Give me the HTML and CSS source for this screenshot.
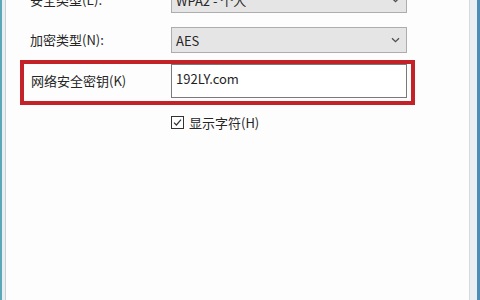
FILE: index.html
```html
<!DOCTYPE html>
<html lang="zh-CN">
<head>
<meta charset="utf-8">
<title>网络属性</title>
<link rel="stylesheet" href="styles.css">
</head>
<body>
<div class="window">
  <div class="panel">
    <div class="row first">
      <span class="label">安全类型(E):</span>
      <div class="select"><span>WPA2 - 个人</span><svg class="chev" width="9" height="6" viewBox="0 0 9 6"><path d="M1 1.2 L4.5 4.6 L8 1.2" fill="none" stroke="#505050" stroke-width="1.3"/></svg></div>
    </div>
    <div class="row second">
      <span class="label">加密类型(N):</span>
      <div class="select"><span>AES</span><svg class="chev" width="9" height="6" viewBox="0 0 9 6"><path d="M1 1.2 L4.5 4.6 L8 1.2" fill="none" stroke="#505050" stroke-width="1.3"/></svg></div>
    </div>
    <div class="keybox">
      <span class="label klabel">网络安全密钥(K)</span>
      <div class="input">192LY.com</div>
    </div>
    <label class="check">
      <span class="box"><svg width="11" height="11" viewBox="0 0 11 11"><path d="M2 5.6 L4.4 8 L9 2.6" fill="none" stroke="#333" stroke-width="1.2"/></svg></span>
      <span>显示字符(H)</span>
    </label>
  </div>
</div>
</body>
</html>
```
FILE: styles.css
```css
html, body {
  margin: 0;
  padding: 0;
  width: 480px;
  height: 300px;
  overflow: hidden;
  background: #ffffff;
  font-family: "Noto Sans CJK SC", "Noto Sans", sans-serif;
  font-size: 13px;
  color: #262626;
}

.window {
  box-sizing: border-box;
  width: 480px;
  height: 300px;
  display: flex;
  border-left: 2px solid #5ca7b6;
  border-right: 3px solid #4f8cb6;
  background: #e9eff2;
  padding: 0 7px 0 3px;
}

.panel {
  flex: 1;
  background: #fdfdfd;
  border-left: 1px solid #c9d0d4;
  border-right: 1px solid #d6d9dc;
  overflow: hidden;
}

.row {
  display: flex;
  align-items: center;
  height: 26px;
  margin-left: 24px;
}

.row.first {
  margin-top: -13px;
}

.row.second {
  margin-top: 14px;
}

.label {
  width: 141px;
  flex: none;
  line-height: 16px;
}

.select {
  box-sizing: border-box;
  width: 236px;
  height: 26px;
  display: flex;
  align-items: center;
  justify-content: space-between;
  padding: 0 6px 0 4px;
  background: #e5e5e5;
  border: 1px solid #adadad;
}

.chev {
  display: block;
}

.keybox {
  box-sizing: border-box;
  width: 395px;
  margin: 7px 0 0 14px;
  display: flex;
  align-items: center;
  border: 4px solid #c42229;
  padding: 0 4px 3px 7px;
}

.klabel {
  width: 140px;
}

.input {
  box-sizing: border-box;
  width: 236px;
  height: 34px;
  border: 1px solid #7a7a7a;
  background: #ffffff;
  padding: 0 0 6px 4px;
  display: flex;
  align-items: center;
  font-size: 13px;
  color: #1f1f1f;
}

.check {
  display: flex;
  align-items: center;
  gap: 5px;
  height: 16px;
  margin: 9px 0 0 165px;
}

.box {
  box-sizing: border-box;
  width: 13px;
  height: 13px;
  border: 1px solid #333;
  background: #fff;
  display: flex;
  align-items: center;
  justify-content: center;
}

.box svg {
  display: block;
}
```
